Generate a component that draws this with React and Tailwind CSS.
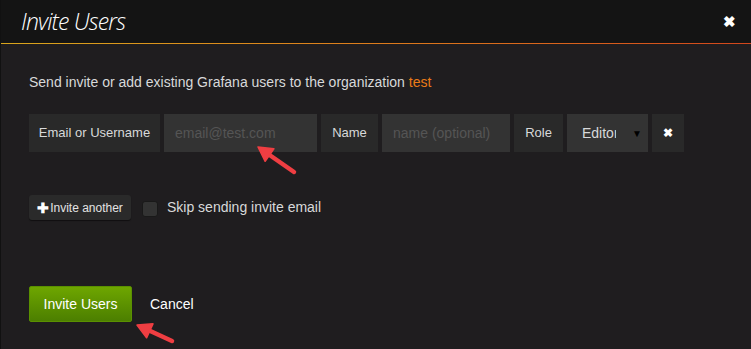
import React from 'react';

const Arrow = ({ className, x1, y1, x2, y2 }) => {
  // arrow pointing from (x2,y2) tail to (x1,y1) tip
  const ang = Math.atan2(y1 - y2, x1 - x2);
  const len = 16;
  const spread = 0.5;
  const ax = x1 - len * Math.cos(ang - spread);
  const ay = y1 - len * Math.sin(ang - spread);
  const bx = x1 - len * Math.cos(ang + spread);
  const by = y1 - len * Math.sin(ang + spread);
  const mx = x1 - 11 * Math.cos(ang);
  const my = y1 - 11 * Math.sin(ang);
  return (
    <svg className={className} width="751" height="349" viewBox="0 0 751 349">
      <line x1={mx} y1={my} x2={x2} y2={y2} stroke="#ef3e42" strokeWidth="4.5" strokeLinecap="round" />
      <polygon points={`${x1},${y1} ${ax},${ay} ${bx},${by}`} fill="#ef3e42" stroke="#ef3e42" strokeWidth="1.5" strokeLinejoin="round" />
    </svg>
  );
};

const App = () => {
  return (
    <div
      className="relative w-[751px] h-[349px] overflow-hidden bg-[#1f1d1f] text-[#d8d9da] border-l border-[#111]"
      style={{ fontFamily: '"Liberation Sans", Arial, sans-serif' }}
    >
      <div className="h-[43px] bg-[#141414] flex items-center justify-between pl-[20px] pr-[15px]">
        <h1
          className="text-[23px] italic font-light text-white tracking-[-0.8px]"
          style={{ fontFamily: '"Open Sans", sans-serif' }}
        >
          Invite Users
        </h1>
        <span className="text-white text-[15px] font-bold leading-none">✖</span>
      </div>
      <div className="h-px bg-gradient-to-r from-[#d9a51c] via-[#dd7c1c] to-[#d2461c]" />

      <div className="px-[28px]">
        <p className="mt-[28px] text-[14px] leading-[20px]">
          Send invite or add existing Grafana users to the organization{' '}
          <span className="text-[#eb7b18]">test</span>
        </p>

        <div className="mt-[22px] flex gap-[4px] h-[38px] text-[13px]">
          <div className="w-[131px] bg-[#292929] flex items-center justify-center">Email or Username</div>
          <div className="w-[153px] bg-[#333333] flex items-center pl-[11px] text-[14px] text-[#555]">email@test.com</div>
          <div className="w-[57px] bg-[#292929] flex items-center justify-center">Name</div>
          <div className="w-[128px] bg-[#333333] flex items-center pl-[11px] text-[14px] text-[#555]">name (optional)</div>
          <div className="w-[49px] bg-[#292929] flex items-center justify-center">Role</div>
          <div className="w-[81px] bg-[#333333] flex items-center pl-[15px] pr-[6px] text-[14px] relative">
            <span className="w-[34px] overflow-hidden whitespace-nowrap">Editor</span>
            <span className="absolute right-[6px] top-[12px] text-[10px] text-black">▼</span>
          </div>
          <div className="w-[32px] bg-[#292929] flex items-center justify-center text-white text-[12px] font-bold">✖</div>
        </div>

        <div className="mt-[43px] flex items-center">
          <button className="h-[25px] w-[102px] bg-[#2a2a2a] rounded-[3px] shadow-[0_1px_1px_rgba(0,0,0,0.5)] flex items-center justify-center text-[12px] text-[#e3e3e3]">
            <span className="text-white font-bold text-[14px] mr-[1px] leading-none">✚</span>
            Invite another
          </button>
          <span className="ml-[11px] w-[16px] h-[16px] rounded-[3px] bg-[#333] border border-[#191919] mt-[2px]" />
          <span className="ml-[9px] text-[14px]">Skip sending invite email</span>
        </div>

        <div className="mt-[66px] flex items-center">
          <button className="h-[36px] w-[103px] rounded-[2px] bg-gradient-to-b from-[#6ea600] to-[#4c7f00] border border-[#5a9000] text-white text-[14px]">
            Invite Users
          </button>
          <span className="ml-[18px] text-[14px] text-white">Cancel</span>
        </div>
      </div>

      <Arrow className="absolute left-0 top-0 pointer-events-none" x1={257} y1={147} x2={293} y2={172} />
      <Arrow className="absolute left-0 top-0 pointer-events-none" x1={136} y1={325} x2={171} y2={341} />
    </div>
  );
};

export default App;
